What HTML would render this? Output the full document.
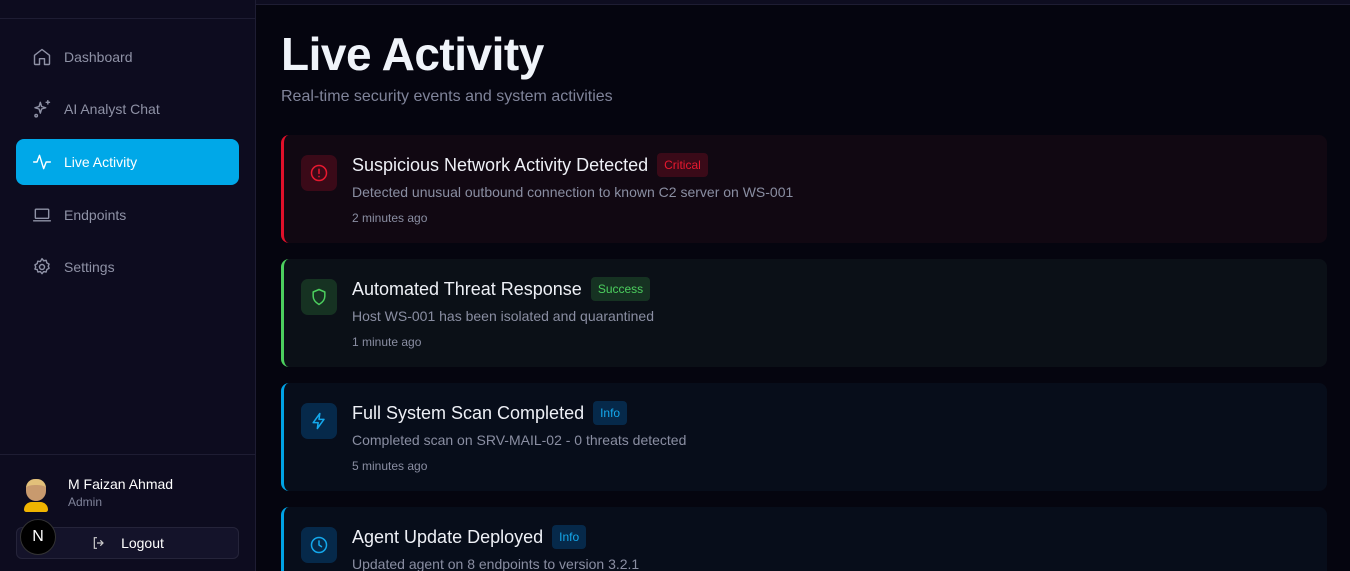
<!DOCTYPE html>
<html><head><meta charset="utf-8"><style>
*{box-sizing:border-box;margin:0;padding:0}
html,body{width:1350px;height:571px;overflow:hidden}
body{background:#05050f;font-family:"Liberation Sans",sans-serif;position:relative}
.sb{position:absolute;left:0;top:0;width:256px;height:571px;background:#0d0c1f;border-right:1px solid #1e1d33}
.sb .top{height:19px;border-bottom:1px solid #1e1d33}
.nav{position:absolute;left:16px;width:223px;height:46px;border-radius:8px;display:flex;align-items:center;padding-left:16px;color:#8f92a6;font-size:14px}
.nav svg{width:20px;height:20px;margin-right:12px;fill:none;stroke:currentColor;stroke-width:1.7;stroke-linecap:round;stroke-linejoin:round}
.nav.act{background:#00a8e8;color:#fff}
.bot{position:absolute;left:0;top:454px;width:255px;border-top:1px solid #1e1d33;height:117px}
.mainbar{position:absolute;left:256px;top:0;right:0;height:5px;background:#0e0d20;border-bottom:1px solid #1e1d33}
h1{position:absolute;left:281px;top:27px;font-size:46px;font-weight:bold;color:#f0f4fa;letter-spacing:-0.5px}
.sub{position:absolute;left:281px;top:88px;font-size:16px;color:#80849a}
.card{position:absolute;left:281px;width:1046px;height:108px;border-radius:8px;border-left:3px solid;overflow:hidden}
.ic{position:absolute;left:17px;top:20px;width:36px;height:36px;border-radius:7px;display:flex;align-items:center;justify-content:center}
.ic svg{width:20px;height:20px;fill:none;stroke-width:1.8;stroke-linecap:round;stroke-linejoin:round}
.t{position:absolute;left:68px;top:18px;font-size:18px;color:#eef0f6;display:flex;align-items:center;white-space:nowrap}
.b{font-size:12px;padding:5px 7px;border-radius:4px;margin-left:9px}
.d{position:absolute;left:68px;top:49px;font-size:14px;color:#8a8ea2}
.tm{position:absolute;left:68px;top:76px;font-size:12px;color:#8a8ea2}
</style></head><body>
<div class="sb"><div class="top"></div>
<div class="nav" style="top:34px"><svg viewBox="0 0 24 24"><path d="M3 10l9-7 9 7v10a1 1 0 0 1-1 1h-5v-7H9v7H4a1 1 0 0 1-1-1z"/></svg>Dashboard</div>
<div class="nav" style="top:86px"><svg viewBox="0 0 24 24"><path d="M10 4l1.5 5 5 1.5-5 1.5L10 17l-1.5-5-5-1.5 5-1.5z"/><path d="M19 2v4M17 4h4"/><circle cx="5" cy="20" r="1.5"/></svg>AI Analyst Chat</div>
<div class="nav act" style="top:139px"><svg viewBox="0 0 24 24"><path d="M2 12h4l3-8 5 16 3-8h5"/></svg>Live Activity</div>
<div class="nav" style="top:192px"><svg viewBox="0 0 24 24"><rect x="4" y="5" width="16" height="11" rx="1"/><path d="M2 19h20"/></svg>Endpoints</div>
<div class="nav" style="top:244px"><svg viewBox="0 0 24 24"><circle cx="12" cy="12" r="3"/><path d="M12 2l2 2.5 3-.5.8 3 2.7 1.5-1 2.5 1 2.5-2.7 1.5-.8 3-3-.5-2 2.5-2-2.5-3 .5-.8-3L3.5 14.5l1-2.5-1-2.5L6.2 8l.8-3 3 .5z"/></svg>Settings</div>
<div class="bot">
<div style="position:absolute;left:22px;top:22px;width:28px;height:36px">
<div style="position:absolute;left:4px;top:2px;width:20px;height:22px;border-radius:9px 9px 10px 10px;background:#c89a6e;border-top:6px solid #e2c07a"></div>
<div style="position:absolute;left:2px;top:25px;width:24px;height:10px;border-radius:10px 10px 3px 3px;background:#f0b400"></div></div>
<div style="position:absolute;left:68px;top:21px;color:#fff;font-size:14px">M Faizan Ahmad</div>
<div style="position:absolute;left:68px;top:40px;color:#80849a;font-size:12px">Admin</div>
<div style="position:absolute;left:16px;top:72px;width:223px;height:32px;border:1px solid #25243a;border-radius:6px;background:#14132a;color:#fff;font-size:14px;display:flex;align-items:center;justify-content:center">
<svg viewBox="0 0 24 24" width="16" height="16" style="margin-right:14px;fill:none;stroke:#ccc;stroke-width:1.8"><path d="M9 4H5v16h4M14 8l4 4-4 4M18 12H9"/></svg>Logout</div>
<div style="position:absolute;left:20px;top:64px;width:36px;height:36px;border-radius:50%;background:#000;border:1px solid #333;color:#fff;font-size:16px;display:flex;align-items:center;justify-content:center">N</div>
</div></div>
<div class="mainbar"></div>
<h1>Live Activity</h1>
<div class="sub">Real-time security events and system activities</div>

<div class="card" style="top:135px;background:#110812;border-color:#e0102a">
<div class="ic" style="background:#3a0a18"><svg viewBox="0 0 24 24" stroke="#e8192f"><circle cx="12" cy="12" r="9"/><path d="M12 7.5v5M12 16v.3"/></svg></div>
<div class="t">Suspicious Network Activity Detected<span class="b" style="background:#3a0a18;color:#e8192f">Critical</span></div>
<div class="d">Detected unusual outbound connection to known C2 server on WS-001</div>
<div class="tm">2 minutes ago</div></div>

<div class="card" style="top:259px;background:#0b1017;border-color:#4ccf5e">
<div class="ic" style="background:#163222"><svg viewBox="0 0 24 24" stroke="#4ccf5e"><path d="M12 3l7 3v5c0 5-3.5 8-7 10-3.5-2-7-5-7-10V6z"/></svg></div>
<div class="t">Automated Threat Response<span class="b" style="background:#163222;color:#4ccf5e">Success</span></div>
<div class="d">Host WS-001 has been isolated and quarantined</div>
<div class="tm">1 minute ago</div></div>

<div class="card" style="top:383px;background:#070d1a;border-color:#00a3e6">
<div class="ic" style="background:#06294a"><svg viewBox="0 0 24 24" stroke="#14a8ec"><path d="M13 3L5 14h6l-1 7 8-11h-6z"/></svg></div>
<div class="t">Full System Scan Completed<span class="b" style="background:#06294a;color:#14a8ec">Info</span></div>
<div class="d">Completed scan on SRV-MAIL-02 - 0 threats detected</div>
<div class="tm">5 minutes ago</div></div>

<div class="card" style="top:507px;height:64px;border-radius:8px 8px 0 0;background:#070d1a;border-color:#00a3e6">
<div class="ic" style="background:#06294a"><svg viewBox="0 0 24 24" stroke="#14a8ec"><circle cx="12" cy="12" r="9"/><path d="M12 7v5l3 2"/></svg></div>
<div class="t">Agent Update Deployed<span class="b" style="background:#06294a;color:#14a8ec">Info</span></div>
<div class="d">Updated agent on 8 endpoints to version 3.2.1</div></div>
</body></html>
